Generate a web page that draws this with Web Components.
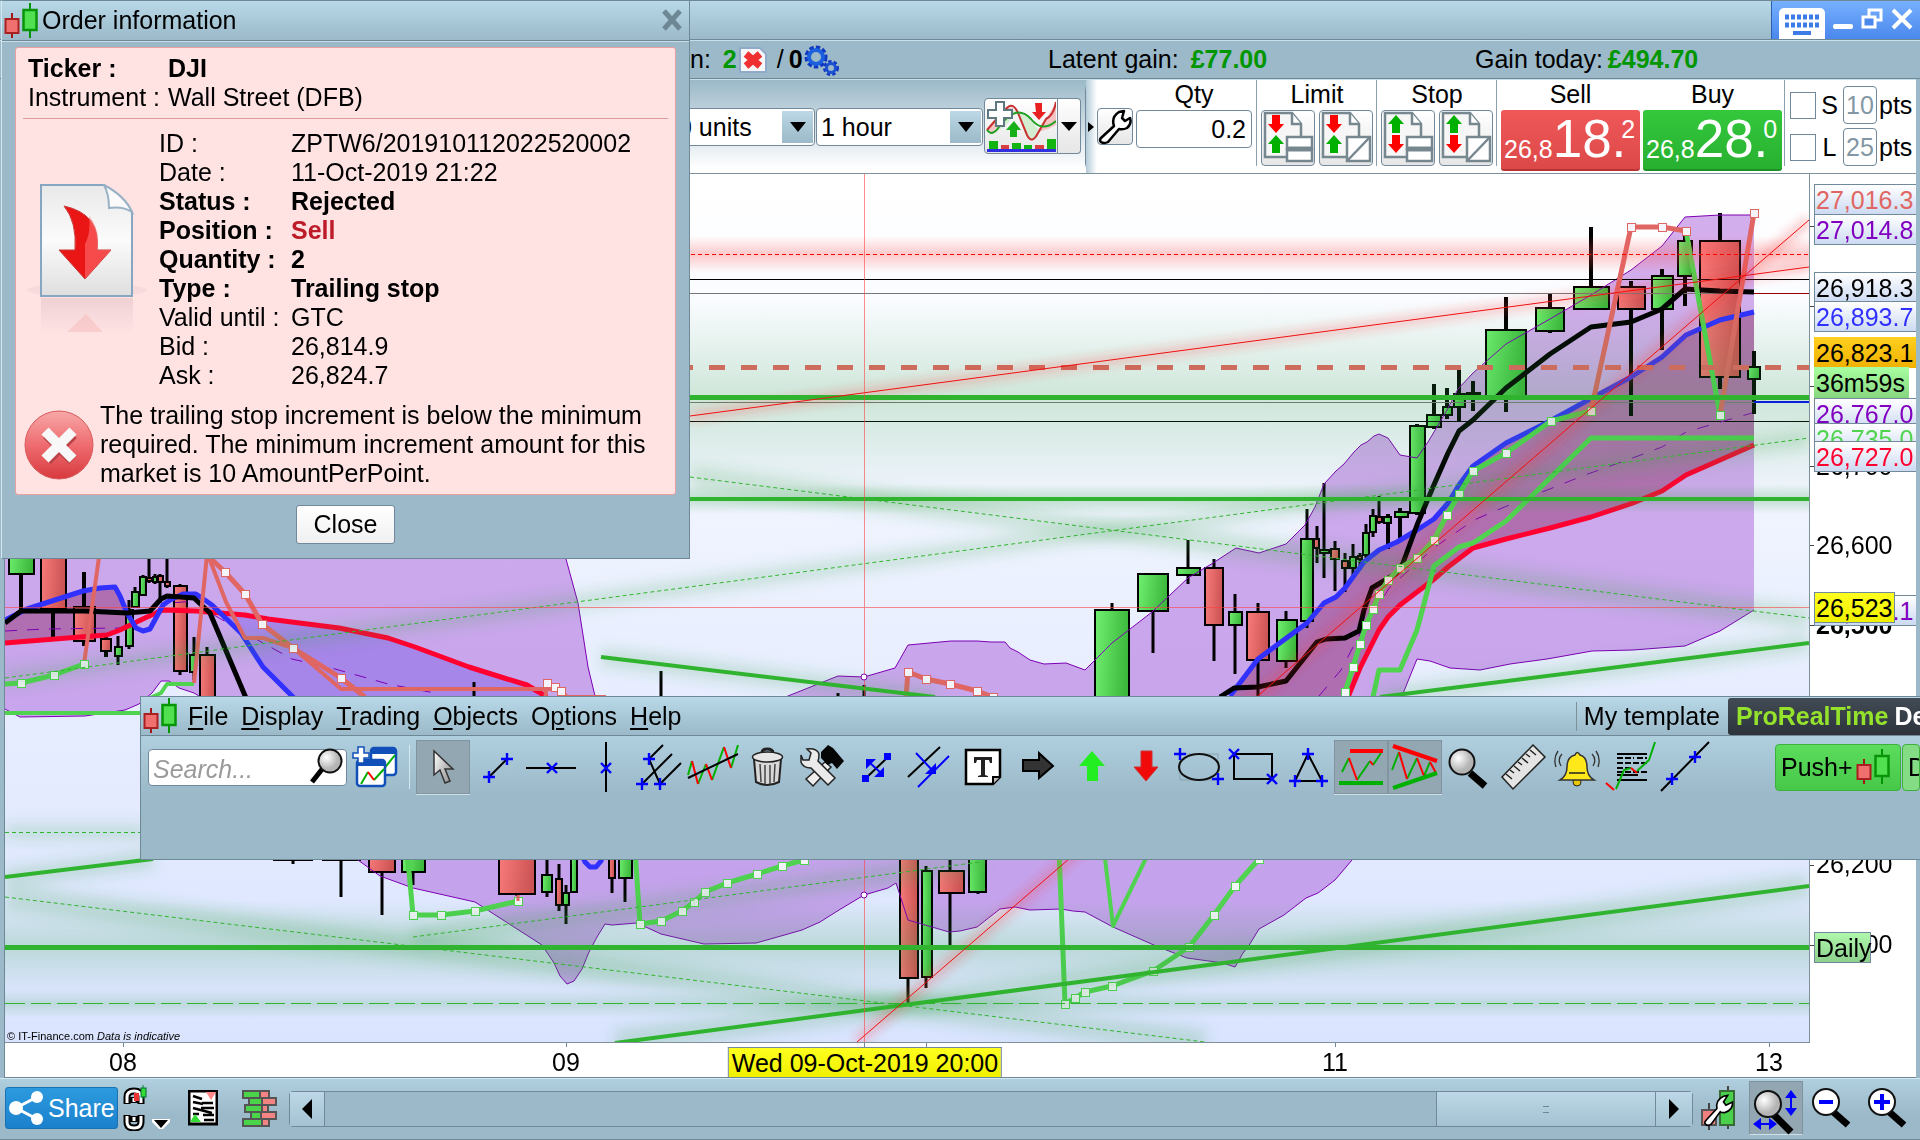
<!DOCTYPE html>
<html lang="en">
<head>
<meta charset="utf-8">
<title>Order information</title>
<style>
html,body{height:100%}
body{margin:0;overflow:hidden;font:25px/29px "Liberation Sans",Arial,sans-serif;color:#000;background:#9bb9c9}
</style>
</head>
<body>
<prt-desktop></prt-desktop>
<script>
const define = (name, html, setup) => customElements.define(name, class extends HTMLElement {
  constructor() {
    super();
    this.attachShadow({mode: 'open'}).innerHTML =
      '<style>*{box-sizing:border-box}button,input,select{font:inherit;color:inherit;margin:0}</style>' + (typeof html === 'function' ? html(this) : html);
    if (setup) setup(this.shadowRoot, this);
  }
});

/* ---------- icons ---------- */
const plus = (x, y) => `<path d="M${x-6} ${y}h12M${x} ${y-6}v12" stroke="#00f" stroke-width="2.4" fill="none"/>`;
const cross = (x, y) => `<path d="M${x-5} ${y-5}l10 10M${x+5} ${y-5}l-10 10" stroke="#00f" stroke-width="2.4" fill="none"/>`;
const ln = (d, c = '#000', w = 2) => `<path d="${d}" stroke="${c}" stroke-width="${w}" fill="none"/>`;
const wrench = 'M4 33L17 19Q15 9 25 4L30 3L25 11L28 15L36 11Q37 21 26 24Q22 24 21 23L10 38Q6 41 3 38Q1 36 4 33Z';
const red = '#f00', grn = '#00b000';
const docBase = `<path d="M3 2H30L39 13V46H3Z" fill="#f6f6f6" stroke="#76878f" stroke-width="2.500"/><path d="M30 2V13H39" fill="#fff" stroke="#76878f" stroke-width="2.500"/>`;
const aDown = (x, y, c) => `<path d="M${x-4} ${y}h8v9h4l-8 9l-8 -9h4z" fill="${c}"/>`;
const aUp = (x, y, c) => `<path d="M${x-4} ${y+18}h8v-9h4l-8 -9l-8 9h4z" fill="${c}"/>`;
const stacked = '<rect x="25" y="26" width="25" height="12" fill="#fff" stroke="#76878f" stroke-width="2.500"/><rect x="25" y="38" width="25" height="12" fill="#fff" stroke="#76878f" stroke-width="2.500"/><path d="M24 38H51" stroke="#76878f" stroke-width="5"/>';
const slashed = '<rect x="27" y="26" width="23" height="24" fill="#fff" stroke="#76878f" stroke-width="2.500"/><path d="M27 50L50 26" stroke="#76878f" stroke-width="2.500"/>';
const I = {
  candles: [36, 38, `<path d="M8 11V36" stroke="#a01818" stroke-width="2"/><rect x="1.500" y="17" width="13" height="14" fill="#f07070" stroke="#a82020" stroke-width="2"/><path d="M26 1V36" stroke="#009400" stroke-width="2"/><rect x="19.500" y="8" width="13" height="20" fill="#50e050" stroke="#089408" stroke-width="2.500"/>`],
  x: [22, 22, ln('M3 2L19 20M19 2L3 20', '#6d8794', 5)],
  cursor: [54, 54, `<defs><linearGradient id="cg" x2="1" y2=".6"><stop stop-color="#fff"/><stop offset="1" stop-color="#999"/></linearGradient></defs><path d="M18 11V35L24 30L29 43L34 41L29 29H37Z" fill="url(#cg)" stroke="#333" stroke-width="1.500"/>`],
  trend: [54, 54, ln('M19 37L37 19') + plus(37, 19) + plus(19, 37)],
  hline: [54, 54, ln('M2 28H52') + cross(28, 28)],
  vline: [54, 54, ln('M28 2V52') + cross(28, 28)],
  fork: [54, 54, ln('M31 5L17 19L28 44L49 23M10 44L40 14') + plus(17, 19) + plus(10, 44) + plus(28, 44)],
  zig: [54, 54, ln('M2 35L6 21M12 44L20 24M26 40L38 7M45 28L52 5', grn) + ln('M6 21L12 44M20 24L26 40M38 7L45 28', red) + ln('M2 38L52 14')],
  trash: [54, 54, `<path d="M22 13Q22 9 27 9Q33 9 33 13" fill="none" stroke="#222" stroke-width="3"/><path d="M14 19L16 42Q27 48 39 42L41 19Z" fill="#d8d8d8" stroke="#222" stroke-width="2"/><ellipse cx="27.500" cy="17" rx="15" ry="5" fill="#e6e6e6" stroke="#222" stroke-width="1.500"/><path d="M20 24L21 42M25 25V44M30 25V44M35 24L34 42" stroke="#444" stroke-width="1.500"/>`],
  tools: [54, 54, `<path d="M31 22L37 27L19 46L12 39Z" fill="#eee" stroke="#222" stroke-width="1.500"/><path d="M27 12L34 5L39 8L50 21L43 29L38 23L34 25L27 18Z" fill="#050505"/><path d="M7 15L9 20L15 20L17 13L13 9Q23 8 25 14Q25 19 24 21L41 38L34 45L17 28Q9 28 7 22Z" fill="#eaeaea" stroke="#222" stroke-width="1.500"/>`],
  arrows: [54, 54, ln('M17 39L40 17') + `<rect x="36" y="13" width="7" height="7" fill="#00f"/><rect x="14" y="35" width="7" height="7" fill="#00f"/>` + ln('M21 22L34 34', '#00f') + '<path d="M18 19h10l-10 10zM36 37h-10l10 -10z" fill="#00f"/>'],
  par: [54, 54, ln('M6 37L38 7') + ln('M16 47L47 16M14 13L32 32', '#00f') + '<path d="M34 34h-11l11 -11z" fill="#00f"/>'],
  text: [54, 54, `<path d="M10 10H44V37L37 44H10Z" fill="#fff" stroke="#000" stroke-width="2.500"/><path d="M37 44V37H44" fill="#bbb" stroke="#000" stroke-width="2"/><path d="M18 17H36V23H34L33 20H29V35L32 36V37H22V36L25 35V20H21L20 23H18Z" fill="#222"/>`],
  right: [54, 54, '<path d="M13 20H29V13L43 26L29 38V31H13Z" fill="#333" stroke="#000" stroke-width="2"/>'],
  up: [54, 54, '<path d="M28 11L41 26H34V41H23V26H15Z" fill="#22ee22"/>'],
  down: [54, 54, '<path d="M23 11H34V27H40L28 41L16 27H23Z" fill="#f00a0a" stroke="#c33"/>'],
  ellipse: [54, 54, '<rect x="8" y="14" width="38" height="26" fill="none" stroke="#8aa4b2"/><ellipse cx="27" cy="27" rx="20" ry="13" fill="none" stroke="#111" stroke-width="2"/>' + plus(8, 14) + plus(46, 39)],
  rect: [54, 54, ln('M8 14H46V39H8Z') + cross(8, 14) + cross(46, 39)],
  tri: [54, 54, ln('M28 14L15 41H42Z') + plus(28, 14) + plus(15, 41) + plus(42, 41)],
  range: [54, 54, ln('M8 32L15 18M23 40L36 21M39 25L47 13', grn) + ln('M15 18L23 40M36 21L39 25', red) + ln('M16 11H49', red, 4) + ln('M5 43H49', grn, 4)],
  wedge: [54, 54, ln('M4 30L11 12M19 39L29 18M36 36L42 22', grn) + ln('M11 12L19 39M29 18L36 36M42 22L48 33', red) + ln('M5 6L49 21', red, 4) + ln('M5 48L49 33', grn, 4)],
  lens: [54, 54, ln('M28 33L43 46', '#000', 7) + '<circle cx="20" cy="22" r="12.500" fill="url(#gl)" stroke="#111" stroke-width="2"/>'],
  ruler: [54, 54, '<path d="M37 5L49 17L17 49L6 37Z" fill="#e4e4e4" stroke="#222" stroke-width="1.500"/><path d="M10 34l6 5M14 30l4 3M18 26l6 5M22 22l4 3M26 18l6 5M30 14l4 3M34 10l6 5" stroke="#222" stroke-width="1.500"/>'],
  bell: [54, 54, '<circle cx="27" cy="42" r="4" fill="#e8c800" stroke="#222"/><path d="M10 40Q17 36 17 27Q17 17 25 15Q27 10 30 15Q37 17 37 27Q37 36 44 40Z" fill="#ffe81a" stroke="#333" stroke-width="1.500"/><path d="M19 33H35" stroke="#222" stroke-width="1.500"/><path d="M12 14Q7 19 11 26M8 11Q3 18 6 27M42 14Q47 19 43 26M46 11Q51 18 48 27" fill="none" stroke="#333" stroke-width="1.300"/>'],
  textchart: [54, 54, '<path d="M13 14H43M13 40H43M13 35H34" stroke="#000" stroke-width="2"/><path d="M13 18H30M33 18H43M13 23H43M13 28H28M13 32H43" stroke="#000" stroke-width="2" stroke-dasharray="6 2"/>' + ln('M12 49L20 30L27 28M33 31L45 20L51 2', grn) + ln('M2 43L10 50M27 28L33 33', red)],
  seg: [54, 54, ln('M3 51L51 2') + plus(14, 39) + plus(37, 17)],
  search: [36, 38, ln('M3 34L14 20', '#000', 5) + '<circle cx="21" cy="13" r="11.500" fill="url(#gl)" stroke="#111" stroke-width="2"/>'],
  tmpl: [46, 42, `<rect x="19" y="2" width="25" height="27" rx="3" fill="#fff" stroke="#1050b8" stroke-width="2.500"/><path d="M19 2h25v6H19z" fill="#1050b8"/>${ln('M31 24L43 9', grn)}<rect x="5" y="14" width="28" height="26" rx="3" fill="#fff" stroke="#1050b8" stroke-width="2.500"/><path d="M5 14h28v6H5z" fill="#1050b8"/>${ln('M9 38L16 26M22 34L32 23', grn)}${ln('M16 26L22 34', red)}<path d="M6 1h6v6h5v5h-5v5H6v-5H1V7h5z" fill="#fff" stroke="#1050b8" stroke-width="1.500"/>`],
  keyboard: [46, 31, `<rect x="0" y="0" width="46" height="36" rx="5" fill="#fff"/><path d="M6 9H40M6 17H40" stroke="#3d7ce6" stroke-width="5" stroke-dasharray="4 2"/><path d="M14 25H32" stroke="#3d7ce6" stroke-width="4"/>`],
  min: [20, 22, '<rect x="0" y="16" width="20" height="5" rx="2" fill="#fff"/>'],
  restore: [22, 22, '<rect x="8" y="2" width="12" height="10" fill="none" stroke="#fff" stroke-width="3"/><rect x="2" y="9" width="12" height="10" fill="#4a88ec" stroke="#fff" stroke-width="3"/>'],
  winx: [22, 22, ln('M2 2L20 20M20 2L2 20', '#fff', 4)],
  cancel: [30, 28, '<path d="M2 2H22L28 8V26H2Z" fill="#f6f6f8" stroke="#8fa9c8" stroke-width="2"/><path d="M8 8L22 20M22 8L8 20" stroke="#f03030" stroke-width="7"/>'],
  gears: [36, 32, '<circle cx="12" cy="13" r="9" fill="none" stroke="#1038c0" stroke-width="5" stroke-dasharray="4 2"/><circle cx="12" cy="13" r="7" fill="none" stroke="#1c60e0" stroke-width="4"/><circle cx="27" cy="24" r="6" fill="none" stroke="#1038c0" stroke-width="4" stroke-dasharray="3 2"/><circle cx="27" cy="24" r="4.500" fill="none" stroke="#1c50d0" stroke-width="3"/>'],
  indic: [70, 54, `<path d="M1 38Q12 28 22 10L30 12Q20 30 8 33ZM31 14Q44 16 53 33Q50 41 45 40Q38 30 31 14Z" fill="#d4ecd0"/><path d="M1 30L18 8L28 9Q14 24 6 34ZM53 33L60 20L70 3V26Q62 31 53 33Z" fill="#f4c4c4"/>${ln('M1 31Q12 18 22 8Q28 4 32 14L41 36Q46 46 52 34L60 20Q68 16 70 3', '#c83030')}${ln('M1 31Q6 38 13 28Q30 4 45 20Q56 34 70 22', '#20a020')}<path d="M10 3h8v8h8v8h-8v8h-8v-8H2v-8h8z" fill="#fff" stroke="#607880" stroke-width="2"/><path d="M24 38h7v-7h4l-7 -9l-8 9h4z" fill="#18b018"/><path d="M49 4h7v9h4l-7 8l-7 -8h4z" fill="#e82020"/><path d="M3 42h9v8H3zM26 44h9v6h-9zM38 46h8v4h-8zM61 40h9v10h-9z" fill="#12b412"/><path d="M15 46h8v4h-8zM49 46h9v4h-9z" fill="#d84040"/><path d="M1 51.500H70" stroke="#3030e0" stroke-width="3"/>`],
  wrench: [34, 36, `<path d="M3 29L16 17Q13 8 21 3L26 2L24 9L27 12L32 9Q34 15 29 19Q25 21 21 20L10 33Q6 35 3 33Q1 31 3 29Z" fill="#fff" stroke="#000" stroke-width="2.500" stroke-linejoin="round"/>`],
  lim1: [52, 54, docBase + aDown(14, 4, red) + aUp(14, 24, grn) + stacked],
  lim2: [52, 54, docBase + aDown(14, 4, red) + aUp(14, 24, grn) + slashed],
  stop1: [52, 54, docBase + aUp(14, 4, grn) + aDown(14, 24, red) + stacked],
  stop2: [52, 54, docBase + aUp(14, 4, grn) + aDown(14, 24, red) + slashed],
  share: [38, 36, '<path d="M29 7L8 18L29 29" fill="none" stroke="#fff" stroke-width="3"/><circle cx="29" cy="7" r="6" fill="#fff"/><circle cx="8" cy="18" r="7" fill="#fff"/><circle cx="29" cy="29" r="6" fill="#fff"/>'],
  link: [24, 46, `<path d="M4 19V12Q4 6 11 6Q18 6 18 12V19M11 12V18M4 30V37Q4 43 11 43Q18 43 18 37V30M11 31V37" fill="none" stroke="#000" stroke-width="7"/><path d="M4 18V12Q4 6 11 6Q18 6 18 12V18M4 31V37Q4 43 11 43Q18 43 18 37V31M11 13V17M11 32V36" fill="none" stroke="#fff" stroke-width="3"/><path d="M20 0V14" stroke="#084"/><rect x="11" y="8" width="5" height="8" fill="#e33"/><rect x="18" y="3" width="5" height="9" fill="#3d3" stroke="#063"/>`],
  tri2: [20, 12, '<path d="M1 1H19V4L12 11H8L1 4Z" fill="#fff"/><path d="M3 2H17L10 10Z" fill="#000"/>'],
  list: [30, 36, '<rect x="1" y="1" width="28" height="33" fill="#fff" stroke="#000" stroke-width="3"/><path d="M5 6L14 9M5 12L15 14M5 18L24 23M13 18H26M14 13H25M15 25H26M16 30H26M5 24H11" stroke="#000" stroke-width="2.500"/><path d="M18 2h10l-5 8z" fill="#f88"/><path d="M2 32h11l-6 -8z" fill="#3d3"/>'],
  book: [36, 37, [[1,18,27],[7,20,34],[3,20,26],[9,19,34],[1,20,27]].map((r, i) => `<rect x="${r[0]}" y="${1 + i * 7}" width="${r[1] - r[0]}" height="7" fill="#4ad44a" stroke="#555" stroke-width="2"/><rect x="${r[1]}" y="${1 + i * 7}" width="${r[2] - r[1]}" height="7" fill="#f48484" stroke="#555" stroke-width="2"/>`).join('')],
  left: [14, 20, '<path d="M12 0V20L2 10Z"/>'],
  rightt: [14, 20, '<path d="M2 0V20L12 10Z"/>'],
  wcandle: [36, 46, '<path d="M8 18V45M27 1V44" stroke="#444" stroke-width="2"/><rect x="1" y="25" width="14" height="15" fill="#f08080" stroke="#555" stroke-width="2"/><rect x="19" y="6" width="14" height="34" fill="#4ad04a" stroke="#396b39" stroke-width="2"/>' + `<path d="${wrench}" fill="#fff" stroke="#000" stroke-width="2" transform="translate(2 8) scale(.82)"/>`],
  zfit: [54, 54, ln('M24 33L42 51', '#000', 7) + '<circle cx="19" cy="23" r="13" fill="url(#gl)" stroke="#111" stroke-width="2"/><path d="M42 12V31M9 43H23" stroke="#00f" stroke-width="2"/><path d="M42 9l6 8h-12zM42 35l6 -8h-12zM4 43l8 -6v12zM28 43l-8 -6v12z" fill="#00f"/>'],
  zout: [42, 42, ln('M19 23L36 38', '#000', 7) + '<circle cx="14" cy="15" r="13" fill="#fff" stroke="#111" stroke-width="2"/><path d="M7 15H21" stroke="#00f" stroke-width="4"/>'],
  zin: [42, 42, ln('M19 23L36 38', '#000', 7) + '<circle cx="14" cy="15" r="13" fill="#fff" stroke="#111" stroke-width="2"/><path d="M6 15H22M14 7V23" stroke="#00f" stroke-width="4"/>'],
  doc: [128, 152, `<defs><linearGradient id="dg" y2="1" x2="0"><stop stop-color="#e9e9e9"/><stop offset=".5" stop-color="#fbfbfb"/><stop offset="1" stop-color="#dedede"/></linearGradient><linearGradient id="rf" x2="0" y2="1"><stop stop-color="#e8c9ce"/><stop offset="1" stop-color="#fee3e3"/></linearGradient></defs><ellipse cx="62" cy="106" rx="60" ry="7" fill="#e6c6ca" opacity=".3"/><path d="M16 114H108V148H16Z" fill="url(#rf)" opacity=".7"/><path d="M61 130L78 148H42Z" fill="#f4b0b0" opacity=".4"/><path d="M16 1H79Q100 14 107 28V112H16Z" fill="url(#dg)" stroke="#86a6c2" stroke-width="2"/><path d="M79 1Q84 10 84 24Q98 22 107 28Q100 12 79 1Z" fill="#fafafa" stroke="#9ab2c6" stroke-width="2"/><path d="M39 22Q52 38 50 66H34L60 95L86 66H72Q76 30 39 22Z" fill="#ea1616" stroke="#c83a3a"/><path d="M64 32Q76 46 72 66H86L60 95V60Q66 50 64 32Z" fill="#ff7070" opacity=".6"/>`],
  error: [70, 70, '<defs><linearGradient id="eg" x2="0" y2="1"><stop stop-color="#f8a8a8"/><stop offset=".5" stop-color="#ee6c70"/><stop offset="1" stop-color="#d83a3e"/></linearGradient></defs><circle cx="35" cy="35" r="34" fill="url(#eg)" stroke="#d85a5c"/><path d="M22 22L48 48M48 22L22 48" stroke="#b84448" stroke-width="11" transform="translate(1 2)"/><path d="M21 21L49 49M49 21L21 49" stroke="#f8f8f8" stroke-width="10"/>'],
};
define('prt-icon', el => {
  const [w, h, body] = I[el.getAttribute('name')];
  return `<style>:host{display:inline-block;flex:none;line-height:0}svg{display:block}</style>
  <svg width="${w}" height="${h}" viewBox="0 0 ${w} ${h}" aria-hidden="true"><defs><radialGradient id="gl" cx=".35" cy=".35"><stop stop-color="#fff"/><stop offset="1" stop-color="#b4b4b4"/></radialGradient></defs>${body}</svg>`;
});

/* ---------- price chart ---------- */
const candles = [
 [21,540,609,9,34,540,574,'g'],[53,540,637,41,66,540,609,'r'],[84,572,646,74,95,607,641,'r'],[106,637,657,101,111,639,651,'r'],
 [118,636,665,115,122,647,656,'g'],[129,600,649,126,133,610,646,'g'],[135,587,608,132,139,592,607,'g'],[143,575,596,140,146,577,595,'g'],
 [149,550,583,147,152,578,581,'r'],[155,574,584,153,157,577,582,'g'],[160,574,603,158,163,576,582,'r'],[167,550,588,165,170,582,586,'r'],
 [180,584,675,174,187,586,671,'r'],[194,637,680,190,196,655,672,'g'],[207,647,710,200,215,655,710,'r'],
 [293,855,864,274,312,858,860,'g'],[341,855,897,323,360,858,860,'g'],[382,855,915,369,395,850,872,'r'],[413,855,885,402,425,850,872,'g'],
 [517,850,896,499,535,850,894,'r'],[547,855,897,542,552,875,892,'g'],[559,864,911,556,562,879,905,'r'],[566,885,924,563,569,893,905,'g'],
 [574,850,893,571,577,850,892,'g'],[612,850,893,609,615,850,878,'r'],[625,850,902,619,632,850,878,'g'],
 [908,850,1003,900,918,850,978,'r'],[926,866,988,922,932,871,977,'g'],[950,850,950,939,964,871,893,'r'],[978,850,894,969,986,850,892,'g'],
 [1112,603,700,1095,1129,610,710,'g'],[1153,574,653,1138,1168,574,611,'g'],[1188,540,584,1177,1200,568,575,'g'],[1214,559,661,1205,1223,568,625,'r'],
 [1235,594,674,1229,1242,612,625,'g'],[1258,603,700,1247,1269,612,660,'r'],[1286,611,668,1277,1297,620,661,'g'],[1307,509,628,1301,1313,539,621,'g'],
 [1317,526,563,1314,1319,539,548,'r'],[1324,483,578,1320,1329,550,553,'g'],[1335,541,591,1331,1339,549,559,'r'],[1345,553,592,1342,1348,561,568,'r'],
 [1353,544,578,1350,1356,557,568,'g'],[1360,553,570,1358,1362,556,559,'r'],[1366,524,558,1363,1369,533,555,'g'],[1373,509,537,1370,1376,516,532,'g'],
 [1379,496,524,1377,1382,517,522,'r'],[1388,514,549,1384,1391,517,523,'g'],[1400,508,538,1395,1408,512,517,'g'],[1417,424,515,1410,1425,426,513,'g'],
 [1434,384,429,1427,1441,415,427,'g'],[1447,388,419,1443,1452,407,415,'g'],[1459,368,421,1454,1465,394,407,'g'],[1473,381,411,1467,1480,393,394,'r'],
 [1506,297,412,1486,1526,330,397,'g'],[1550,294,333,1536,1564,308,331,'g'],[1591,227,310,1574,1609,287,309,'g'],[1631,281,416,1618,1645,287,309,'r'],
 [1662,269,350,1652,1673,276,309,'g'],[1685,234,306,1678,1692,241,276,'g'],[1720,213,389,1700,1740,241,377,'r'],[1754,351,414,1748,1760,367,379,'g']];
const upA = '5,500 560,500 566,559 578,603 588,667 595,696 640,800';
const upB = '740,720 788,696 838,676 864,677 895,668 908,645 951,641 977,641 991,642 1005,642 1010,648 1018,652 1030,660 1044,664 1066,663 1085,670 1112,643 1152,612 1188,578 1213,563 1236,548 1259,553 1286,544 1305,525 1315,507 1324,484 1336,471 1344,464 1354,452 1361,445 1367,442 1374,436 1379,434 1388,438 1400,455 1417,458 1428,442 1437,427 1447,410 1458,389 1473,373 1506,344 1550,319 1591,295 1631,270 1662,246 1685,217 1720,215 1754,215';
const low = '1754,610 1720,631 1685,646 1633,650 1592,651 1547,659 1510,664 1480,670 1450,668 1430,661 1417,659 1402,696 1352,860 1335,880 1318,893 1306,898 1284,915 1259,929 1248,947 1243,953 1235,967 1223,963 1187,958 1156,946 1113,927 1085,912 1073,911 1061,909 1030,910 1015,907 1000,909 977,927 960,931 949,932 908,920 896,883 888,888 864,895 839,910 820,922 802,930 781,936 756,943 704,944 661,934 637,923 612,925 605,924 597,937 589,952 582,969 574,981 567,984 560,976 554,963 542,945 475,902 413,888 380,876 358,860 300,800 199,696 194,693 179,688 169,681 161,681 152,693 139,704 125,710 85,716 20,717 5,709';
const blueL = '5,620 27,609 83,591 100,588 115,587 120,596 127,613 136,628 143,631 150,629 163,605 170,600 183,594 196,594 212,605 241,633 263,667 294,698';
const redL = '5,643 80,637 107,635 120,630 147,617 163,610 196,611 245,615 268,619 339,628 388,638 415,647 469,667 504,678 527,685 547,697';
const blueR = '1230,696 1258,659 1307,623 1324,603 1336,597 1345,588 1364,562 1379,550 1397,542 1417,530 1434,519 1448,503 1459,485 1473,466 1506,443 1550,421 1592,398 1631,377 1662,357 1686,335 1720,320 1754,312';
const redR = '1348,697 1360,668 1379,630 1388,617 1400,605 1417,592 1433,580 1448,567 1473,548 1506,539 1550,528 1591,517 1633,503 1662,491 1686,475 1754,445';
const rev = s => s.split(' ').reverse().join(' ');
const pl = (pts, c, w, extra = '') => `<polyline points="${pts}" fill="none" stroke="${c}" stroke-width="${w}" stroke-linejoin="round" ${extra}/>`;
const sq = (pts, c) => pts.split(' ').map(p => { const [x, y] = p.split(',').map(Number); return `<rect x="${x - 3.5}" y="${y - 3.5}" width="8" height="8" fill="#f4f4fa" stroke="${c}"/>`; }).join('');
const G = '#50d450', S = '#e06664', T = '#30b430';
const gL = '5,684 21,683 54,675 84,664', gM = '413,915 441,915 475,911 518,901', gM2 = '640,924 661,921 682,911 694,902 705,892 727,883 757,874 782,866 804,860';
const gR1 = '1065,1004 1075,998 1085,992 1112,986 1153,971 1189,947 1214,915 1235,886 1259,859';
const gR = '1345,692 1353,667 1360,644 1366,625 1373,609 1379,594 1388,580 1400,568 1417,558 1434,540 1447,515 1459,494 1473,471 1506,453 1551,421 1591,411';
const sA = '225,572 245,594 262,624 293,648 341,678', sM = '908,672 926,679 950,684 977,691 993,697';
const glow = (pts, w, c = '#30a040', o = .2) => `<polyline points="${pts}" fill="none" stroke="${c}" stroke-width="${w}" opacity="${o}"/>`;
const band = (y1, y2, c, o) => `<rect x="5" y="${y1}" width="1804" height="${y2 - y1}" fill="url(#${c})" opacity="${o}"/>`;
define('price-chart', `<style>:host{display:block;position:relative;min-width:0;min-height:0;overflow:hidden;border-right:1px solid #7e909a;border-bottom:1px solid #7e909a}
svg{display:block;width:100%;height:100%}p{position:absolute;left:2px;bottom:0;margin:0;font-size:11px;line-height:12px;white-space:nowrap}</style>
<svg viewBox="5 174 1804 868" preserveAspectRatio="none" role="img" aria-label="Wall Street hourly chart">
<defs>
<linearGradient id="bg" x2="0" y2="1"><stop stop-color="#fff"/><stop offset=".1" stop-color="#fcfdff"/><stop offset=".5" stop-color="#ebf0ff"/><stop offset="1" stop-color="#dae4ff"/></linearGradient>
<linearGradient id="up" x2="1" y2=".15"><stop stop-color="#70f070"/><stop offset="1" stop-color="#3cb83c"/></linearGradient>
<linearGradient id="dn" x2="1" y2=".15"><stop stop-color="#fa7c7c"/><stop offset="1" stop-color="#cc5454"/></linearGradient>
<linearGradient id="gg" x2="0" y2="1"><stop stop-color="#30a040" stop-opacity="0"/><stop offset=".5" stop-color="#30a040"/><stop offset="1" stop-color="#30a040" stop-opacity="0"/></linearGradient>
<linearGradient id="rg" x2="0" y2="1"><stop stop-color="#ff5050" stop-opacity="0"/><stop offset=".5" stop-color="#ff5050"/><stop offset="1" stop-color="#ff5050" stop-opacity="0"/></linearGradient>
<filter id="bl" filterUnits="userSpaceOnUse" x="-40" y="140" width="1900" height="940"><feGaussianBlur stdDeviation="7"/></filter>
<filter id="bs" filterUnits="userSpaceOnUse" x="-40" y="140" width="1900" height="940"><feGaussianBlur stdDeviation="4"/></filter>
</defs>
<rect x="5" y="174" width="1804" height="868" fill="url(#bg)"/>
<g id="scene"></g>
</svg><p>© IT-Finance.com&nbsp;<i>Data is indicative</i></p>`, root => {
  const c = candles.map(([x, hi, lo, a, b, t, d, k]) =>
    `<path d="M${x} ${hi}V${lo}" stroke="#000" stroke-width="${x > 1380 || x < 110 ? 4 : 3}"/><rect x="${a}" y="${t}" width="${b - a}" height="${Math.max(d - t, 1)}" fill="url(#${k === 'g' ? 'up' : 'dn'})" stroke="#000" stroke-width="2"/>`).join('');
  root.querySelector('#scene').innerHTML =
   `<polygon points="${upA} ${upB} ${low}" fill="#aa5ed9" opacity=".5"/>
    <polygon points="${blueR} ${rev(redR)}" fill="#871b57" opacity=".4"/>
    <polygon points="5,620 27,609 83,591 115,587 127,613 130,625 120,630 107,635 80,637 5,643" fill="#871b57" opacity=".4"/>
    <polygon points="196,611 245,615 268,619 339,628 388,638 415,647 469,667 504,678 547,697 294,697 263,667 241,633 212,605" fill="#4528e4" opacity=".25"/>
    ${c}
    ${pl(upA, '#7d00b4', 1)}${pl(upB, '#7d00b4', 1)}${pl(low, '#7d00b4', 1)}
    <path d="M5 279.500H1809M5 421.500H1809" stroke="#000"/><path d="M5 293.500H1809M5 402.500H1809" stroke="#777"/>
    ${pl('474,682 474,700', '#000', 3)}${pl('661,671 661,700', '#000', 3)}${pl('838,693 838,700', '#000', 3)}${pl('864,685 864,700', '#000', 3)}
    ${pl('5,631 45,629 120,628 150,614 170,603 196,601 214,615 245,633 292,659 335,669 388,684 440,694', '#7d00b4', 1, 'stroke-dasharray="12 10"')}
    ${pl('1319,696 1341,670 1362,630 1390,587 1435,547 1474,520 1507,506 1585,475 1630,459 1662,447 1686,432 1752,413', '#7d00b4', 1, 'stroke-dasharray="12 12"')}
    ${pl(redL, '#ff0030', 5)}${pl(redR, '#ff0030', 5)}${pl(blueL, '#3030ff', 5)}${pl(blueR, '#3030ff', 5)}
    ${pl('580,850 585,862 590,867 596,867 601,861 604,850', '#3030ff', 5)}
    ${pl('5,623 21,611 85,611 127,613 150,611 161,599 167,596 194,598 210,613 246,698', '#000', 5)}
    ${pl('1220,697 1234,688 1258,687 1286,681 1317,642 1326,639 1345,638 1359,631 1364,610 1372,588 1397,573 1403,563 1417,525 1433,487 1448,453 1459,431 1473,420 1506,388 1550,354 1591,327 1631,322 1662,309 1685,289 1720,291 1754,292', '#000', 5)}
    ${pl('5,713 141,713', G, 4)}${pl('150,698 161,693 167,684 194,684', G, 4)}
    ${pl(gL, G, 5)}${sq(gL.slice(6), G)}${pl('100,550 84,664', S, 4)}${sq('84,664', G)}${pl('194,683 207,555', S, 4)}
    ${pl('207,555 ' + sA + ' 365,697', S, 5)}${pl('208,555 226,602 245,638 263,638 293,648 341,689 560,689 567,697', S, 4)}${pl('545,700 547,683 555,687 561,691 567,700', S, 4)}${pl('558,696 606,696', S, 2)}${sq(sA + ' 547,683 555,687 561,691', S)}
    ${pl('407,850 ' + gM, G, 5)}${sq(gM, G)}${pl('635,850 ' + gM2, G, 5)}${sq(gM2, G)}${pl('518,895 518,901', S, 3)}
    ${pl('1059,850 ' + gR1, G, 5)}${sq(gR1, G)}${pl('1104,850 1113,926 1150,850', G, 4)}
    ${pl('906,697 ' + sM, S, 5)}${sq(sM, S)}
    ${pl('1373,697 1379,670 1400,670 1417,630 1434,566 1459,547 1473,543 1506,521 1591,438 1754,438', G, 5)}
    ${pl(gR, G, 5)}${pl('1591,411 1631,227 1662,227 1686,231', S, 5)}${pl('1686,231 1720,415', G, 5)}${pl('1720,415 1754,213', S, 5)}
    ${sq(gR + ' 1720,415', G)}${sq('1631,227 1662,227 1686,231 1754,213', S)}
    <path d="M1754 293.500H1809" stroke="#900"/><path d="M1754 402H1809" stroke="#00f" stroke-width="2"/>
    ${band(236, 273, 'rg', .3)}${band(300, 496, 'gg', .2)}${band(484, 514, 'gg', .25)}${band(900, 993, 'gg', .2)}${band(989, 1018, 'gg', .18)}
    <path d="M5 367.500H1809" stroke="#cb6c5c" stroke-width="5" stroke-dasharray="16 16"/>
    <g filter="url(#bl)">${glow('5,678 1809,438', 16)}${glow('690,477 1809,618', 22)}${glow('5,897 1205,1042', 24)}${glow('413,937 980,862', 20)}${glow('601,657 935,697', 18)}${glow('1380,697 1809,643', 18)}${glow('5,878 153,859', 18)}${glow('5,832 145,832', 14)}${glow('615,1042 1809,886', 24)}</g>
    <g filter="url(#bs)">${glow('690,416 1809,267', 12, '#ff3030', .2)}${glow('857,1042 1809,220', 12, '#ff3030', .22)}</g>
    <path d="M5 254.500H1809" stroke="#f00" stroke-dasharray="4 3"/>
    <g fill="none" stroke="${T}"><path d="M5 678L1809 438M690 477L1809 618M5 897L1205 1042M413 937L980 862M5 832.500H145" stroke-dasharray="4 3"/>
    <path d="M5 1003.500H1809" stroke-dasharray="20 6"/>
    <path d="M601 657L935 697M1380 697L1809 643M5 877L153 859M615 1043L1809 886M5 499H1809" stroke-width="4"/><path d="M5 397.500H1809M5 947.500H1809" stroke-width="5"/></g>
    <path d="M690 416L1809 267M857 1042L1809 220" stroke="#f01010" fill="none"/>
    <path d="M5 607.500H1809M864.500 174V1042" stroke="#ff4040" opacity=".6"/>
    <g fill="#fff" stroke="#7d00b4"><circle cx="864" cy="677" r="3"/><circle cx="864" cy="895" r="3"/></g>`;
});

const at = (v, from, span) => `${((v - from) / span * 100).toFixed(4)}%`;
define('price-axis', `<style>:host{display:block;position:relative;background:#fff;overflow:hidden}
#r{display:contents}
span{position:absolute;left:4px;padding:0 2px;height:31px;line-height:31px;white-space:nowrap}
.b{border:1px solid #71899a;background:linear-gradient(#fff,#ccdaf2);width:103px;padding:0 1px}
.f{line-height:33px}
i{position:absolute;left:0;width:4px;height:1px;background:#444}
</style><div id="r"></div>`, root => {
  const y = v => at(v, 174, 869);
  const ticks = [226,306,386,466,545,625,865,945].map(v => `<i style="top:${y(v)}"></i>`).join('');
  const plain = [[451,'26,700'],[530,'26,600'],[610,'26,500','font-weight:bold'],[849,'26,200'],[929,'26,100']]
    .map(([v, t, s = '']) => `<span style="top:${y(v)};${s}">${t}</span>`).join('');
  const boxed = [[184,'27,016.3','#e06664'],[214,'27,014.8','#8000c0'],[272,'26,918.3','#000'],[301,'26,893.7','#3030ff'],
    [398,'26,767.0','#8000c0'],[423,'26,735.0','#50d450'],[441,'26,727.0','#ff0030'],[595,'26,521.1','#8000c0']]
    .map(([v, t, c]) => `<span class="b" style="top:${y(v)};color:${c}">${t}</span>`).join('');
  root.querySelector('#r').innerHTML = ticks + plain + boxed +
    `<span class="f" style="top:${y(337)};background:linear-gradient(#ffd020,#f0b000);width:103px">26,823.1</span>
     <span class="f" style="top:${y(367)};background:linear-gradient(#a8ffa0,#86d680);width:95px">36m59s</span>
     <span class="b" style="top:${y(592)};width:81px;background:linear-gradient(#ffff20,#f0f000)">26,523</span>
     <span class="b" style="top:${y(932)};width:57px;background:linear-gradient(#b0f8ac,#8cd08c)">Daily</span>`;
});
define('time-axis', `<style>:host{display:block;position:relative;background:#fff;height:34px}
#r{display:contents}
span{position:absolute;top:5px;transform:translateX(-50%);white-space:nowrap}
span.b{top:4px;height:30px;line-height:30px;padding:0 3px;border:1px solid #71899a;border-bottom:0;background:linear-gradient(#ffff20,#f0f000)}
i{position:absolute;top:0;width:1px;height:4px;background:#71899a}</style><div id="r"></div>`, root => {
  root.querySelector('#r').innerHTML = [[123,'08'],[566,'09'],[1335,'11'],[1769,'13']]
    .map(([x, t]) => `<i style="left:${at(x, 5, 1911)}"></i><span style="left:${at(x, 5, 1911)}">${t}</span>`).join('') +
    `<i style="left:${at(926, 5, 1911)}"></i><i style="left:${at(864, 5, 1911)}"></i><span class="b" style="left:${at(865, 5, 1911)}">Wed 09-Oct-2019 20:00</span>`;
});

/* ---------- main window ---------- */
define('title-bar', `<style>:host{display:flex;justify-content:flex-end;height:40px;border-top:1px solid #6f8895;border-bottom:1px solid #6f8895;background:linear-gradient(#b8d8e8,#9bb9c8)}
nav{display:flex;align-items:flex-start;gap:8px;padding:7px 7px 0 7px;background:linear-gradient(#76b0ff,#4a88ec);border-left:1px solid #2c5fb0}
button{border:0;padding:0;background:none;line-height:0}</style>
<nav aria-label="Window"><button aria-label="Keyboard"><prt-icon name="keyboard"></prt-icon></button><button aria-label="Minimise"><prt-icon name="min"></prt-icon></button><button aria-label="Restore"><prt-icon name="restore"></prt-icon></button><button aria-label="Close window"><prt-icon name="winx"></prt-icon></button></nav>`);

define('status-bar', `<style>:host{display:grid;grid-template-columns:690fr 358fr 427fr 445fr;align-items:center;height:39px;background:#9bb9c8;border-top:1px solid #c6dfeb;border-bottom:1px solid #6f8895;white-space:nowrap}
div{display:flex;align-items:center}b{color:#009600;margin-left:12px}.t b{margin-left:5px}b.k{color:#000;margin-left:5px}prt-icon{margin-left:1px}.s{margin-left:9px}</style>
<span></span><div><span>n:</span><b>2</b><prt-icon name="cancel"></prt-icon><span class="s">/</span><b class="k">0</b><prt-icon name="gears"></prt-icon></div>
<div>Latent gain:<b>£77.00</b></div><div class="t">Gain today:<b>£494.70</b></div>`);

define('price-button', `<style>:host{display:block}button{display:flex;align-items:flex-end;width:139px;height:61px;padding:0 0 7px 3px;border:0;border-radius:3px;color:#fff;text-align:left;background:linear-gradient(#f05858,#dc4848);border-bottom:2px solid #b83434}
:host([side=buy]) button{background:linear-gradient(#34c83c,#28b030);border-color:#1c9024}
.m{font-size:53px;line-height:50px;margin-bottom:-2px}.p{line-height:29px;align-self:flex-start;margin-top:5px;margin-left:-5px}.h{line-height:25px}</style>
<button><span class="h"><slot name="handle"></slot></span><span class="m"><slot></slot></span><span class="p"><slot name="pip"></slot></span></button>`);

define('trade-bar', `<style>:host{display:flex;justify-content:flex-end;height:95px;margin:0 4px 0 2px;border-bottom:1px solid #7e909a;background:linear-gradient(#9bb9c8,#fff 95%);border-top:1px solid #c6dfeb;overflow:hidden}
.sel{position:relative;display:flex;margin:28px 1px 0 0;height:38px}
select{appearance:none;width:167px;height:38px;padding:0 35px 0 4px;border:1px solid #71899a;border-radius:4px;background:#fff}
.sel::after{content:"";position:absolute;right:2px;top:3px;width:31px;height:32px;background:linear-gradient(#bcd8e6,#9bb9c8);pointer-events:none}
.sel::before{content:"";position:absolute;z-index:1;right:9px;top:14px;border:8px solid transparent;border-top:10px solid #000;border-bottom:0;pointer-events:none}
button{padding:0;border:1px solid #71899a;border-radius:4px;background:linear-gradient(#fff,#e6e6e6);display:flex;align-items:center;justify-content:center}
.ind{display:flex;margin:18px 4px 0 0}.ind button{height:56px;width:74px;border-radius:4px 0 0 4px}.ind button+button{width:23px;border-radius:0 4px 4px 0;border-left:0}
.panel{display:flex;background:#fff;border-left:1px solid #71899a;border-radius:10px 0 0 10px;width:831px}.panel>*{flex:none}
.dn{border:8px solid transparent;border-top:9px solid #000;border-bottom:0}
.grip{width:11px;background:linear-gradient(90deg,#b4ccd8,#fff);display:flex;align-items:center}.grip::after{content:"";border:5px solid transparent;border-left:6px solid #000;border-right:0;margin-left:2px}
.w{width:36px;height:37px;margin:28px 3px 0 0}
.col{display:flex;flex-direction:column;align-items:center;border-right:1px solid #8ba0ab;height:86px;padding:0 3px 0 4px}
.col.q{padding:0 4px 0 0}
.lab{display:block;height:30px;line-height:28px;text-align:center}
.row{display:flex;gap:4px}.row button{width:54px;height:56px}
.qty{width:116px;height:38px;text-align:right;padding:0 5px;border:1px solid #71899a;border-radius:4px;background:#fff}
.col.last{padding-right:2px}.col.last .row{gap:3px}
.opts{margin-top:6px;padding-left:5px;display:grid;grid-template:38px 38px/26px 27px 34px 39px;row-gap:4px;align-content:start;align-items:center;justify-items:center}
.opts input[type=text]{width:34px;height:38px;border:1px solid #71899a;border-radius:4px;padding:0;text-align:center;color:#8398a4;background:#fff}
.opts input[type=checkbox]{appearance:none;width:26px;height:27px;border:1px solid #71899a;background:#fff;margin:0}
.opts span{justify-self:start;padding-left:2px}
</style>
<div class="sel"><select aria-label="Units" style="width:142px"><option>0 units</option></select></div>
<div class="sel"><select aria-label="Timeframe"><option>1 hour</option></select></div>
<div class="ind"><button aria-label="Add indicator"><prt-icon name="indic"></prt-icon></button><button aria-label="Indicator menu"><span class="dn"></span></button></div>
<div class="panel"><div class="grip"></div><button class="w" aria-label="Order settings"><prt-icon name="wrench"></prt-icon></button>
<div class="col q"><label class="lab" for="q">Qty</label><input class="qty" id="q" value="0.2"></div>
<div class="col"><span class="lab">Limit</span><div class="row"><button aria-label="Limit order"><prt-icon name="lim1"></prt-icon></button><button aria-label="Limit with slash"><prt-icon name="lim2"></prt-icon></button></div></div>
<div class="col"><span class="lab">Stop</span><div class="row"><button aria-label="Stop order"><prt-icon name="stop1"></prt-icon></button><button aria-label="Stop with slash"><prt-icon name="stop2"></prt-icon></button></div></div>
<div class="col last"><div class="row"><div><span class="lab">Sell</span><price-button side="sell"><span slot="handle">26,8</span>18.<span slot="pip">2</span></price-button></div><div><span class="lab">Buy</span><price-button side="buy"><span slot="handle">26,8</span>28.<span slot="pip">0</span></price-button></div></div></div>
<div class="opts"><input type="checkbox" id="s"><label for="s">S</label><input type="text" value="10" aria-label="Stop points"><span>pts</span><input type="checkbox" id="l"><label for="l">L</label><input type="text" value="25" aria-label="Limit points"><span>pts</span></div>
</div>`);

define('nav-bar', `<style>:host{display:flex;align-items:center;height:62px;padding:0 10px 2px 5px;border-top:1px solid #d4e8f2;border-bottom:1px solid #6f8895;background:linear-gradient(#b0cfde,#9bb9c8 60%)}
button{border:0;background:none;padding:0;display:flex;align-items:center;justify-content:center;flex:none}
.share{width:113px;height:42px;color:#fff;background:linear-gradient(#2c9ade,#1c80cc);border:1px solid #1872b4;border-radius:3px;justify-content:flex-start;gap:2px;padding-left:2px}
.track{display:flex;flex:1;min-width:0;height:36px;margin:2px 0 0 11px;border:1px solid #71899a;border-radius:4px;background:#9bb9c8;justify-content:space-between}
.track button{width:35px;background:linear-gradient(#bcd8e6,#a4c2d2);border-right:1px solid #71899a}.end{display:flex}.end .thumb{width:220px;border-left:1px solid #71899a}.end button:last-child{border-right:0;width:36px}
.thumb::after{content:"";width:6px;height:5px;border-top:1px solid #6d8794;border-bottom:1px solid #6d8794}
.on{background:#93a7b2;border:1px solid #7f929d;border-bottom-color:#d0e0e8;width:54px;height:54px;margin:0 9px 0 12px}</style>
<button class="share"><prt-icon name="share"></prt-icon>Share</button>
<button aria-label="Link charts" style="margin-left:5px"><prt-icon name="link"></prt-icon></button><button aria-label="Link menu" style="margin:32px 0 0 4px"><prt-icon name="tri2"></prt-icon></button>
<button aria-label="Orders list" style="margin-left:17px"><prt-icon name="list"></prt-icon></button><button aria-label="Order book" style="margin-left:24px"><prt-icon name="book"></prt-icon></button>
<div class="track"><button aria-label="Scroll left"><prt-icon name="left"></prt-icon></button><div class="end"><button class="thumb" aria-label="Scroll position"></button><button aria-label="Scroll right"><prt-icon name="rightt"></prt-icon></button></div></div>
<button aria-label="Chart settings" style="margin-left:8px"><prt-icon name="wcandle"></prt-icon></button>
<button class="on" aria-label="Fit"><prt-icon name="zfit"></prt-icon></button><button aria-label="Zoom out"><prt-icon name="zout"></prt-icon></button><button aria-label="Zoom in" style="margin-left:14px"><prt-icon name="zin"></prt-icon></button>`);

define('chart-window', `<style>:host{display:flex;flex-direction:column;height:100%;background:#9bb9c8}
main{flex:1;min-height:0;display:grid;grid-template:minmax(0,1fr) 34px/minmax(0,1fr) 106px;margin:0 4px 0 4px;border-left:1px solid #6f8895;border-bottom:1px solid #6f8895}
time-axis{grid-column:1/3}</style>
<title-bar></title-bar><status-bar></status-bar><trade-bar></trade-bar>
<main><price-chart></price-chart><price-axis></price-axis><time-axis></time-axis></main><nav-bar></nav-bar>`);

/* ---------- floating windows ---------- */
define('tool-window', `<style>:host{display:block;background:linear-gradient(#b0cfde 40px,#9bb9c8 60%);border:1px solid #6f8895;border-right:0;overflow:hidden;white-space:nowrap}
header{display:flex;align-items:center;height:39px;border-bottom:1px solid #6f8895;background:linear-gradient(#b8d8e8,#9bb9c8);padding-left:2px}
nav{display:flex;gap:13px;flex:1;margin-left:9px}a{color:inherit;text-decoration:none}u{text-underline-offset:3px;text-decoration-thickness:2px}
.tpl{border-left:1px solid #7e909a;padding:0 8px 0 7px}.brand{background:linear-gradient(#424b55,#2c333b);color:#95e22c;font-weight:bold;height:37px;line-height:36px;padding-left:8px;border-radius:3px 0 0 3px;width:192px;overflow:hidden}.brand span{color:#fff;margin-left:6px}
.bar{display:flex;align-items:center;padding:4px 0 0 7px;height:58px}
.search{display:flex;align-items:center;width:199px;height:37px;background:#fff;border:1px solid #71899a;border-radius:4px;flex:none}
input{border:0;background:none;width:160px;padding:4px 0 0 4px;outline:0}input::placeholder{color:#9a9a9a;font-style:italic;opacity:1}
button{border:0;background:none;padding:0;width:54px;height:54px;flex:none;display:flex}
.t{width:46px;height:42px;margin:0 11px 0 5px}.sep{border-left:1px solid #d4e8f2;height:44px;margin-right:6px}
.on{background:#93a7b2;box-shadow:inset 0 0 0 1px #8195a0,0 1px #d0e0e8}
.p{background:linear-gradient(#5cdc5c,#48c848);border:1px solid #3eb03e;border-radius:4px;width:126px;height:47px;align-items:center;padding-left:5px;gap:3px}.p.d{background:#84dc84;margin-left:1px;width:18px;overflow:hidden}.sp{flex:1}</style>
<header><prt-icon name="candles"></prt-icon><nav aria-label="Menu"><a href="#"><u>F</u>ile</a><a href="#"><u>D</u>isplay</a><a href="#"><u>T</u>rading</a><a href="#"><u>O</u>bjects</a><a href="#">O<u>p</u>tions</a><a href="#"><u>H</u>elp</a></nav>
<div class="tpl">My template</div><div class="brand">ProRealTime<span>De</span></div></header>
<div class="bar"><div class="search"><input type="text" placeholder="Search..." aria-label="Search"><prt-icon name="search"></prt-icon></div>
<button class="t" aria-label="New chart"><prt-icon name="tmpl"></prt-icon></button><span class="sep"></span><span id="tools" style="display:flex"></span>
<span class="sp"></span><button class="p">Push+<prt-icon name="candles"></prt-icon></button><button class="p d">D</button></div>`, root => {
  root.querySelector('#tools').innerHTML = 'cursor trend hline vline fork zig trash tools arrows par text right up down ellipse rect tri range wedge lens ruler bell textchart seg'
    .split(' ').map(n => `<button aria-label="${n}"${/cursor|range|wedge/.test(n) ? ' class="on"' : ''}><prt-icon name="${n}"></prt-icon></button>`).join('');
});

define('order-dialog', `<style>:host{display:block;background:#9bb9c8;border:1px solid #6f8895;border-left-color:#d4e8f2}
header{display:flex;align-items:center;height:40px;padding:0 6px 0 2px;border-bottom:1px solid #6f8895;background:linear-gradient(#b8d8e8,#9bb9c8);box-shadow:0 1px #c6dfeb}
h1{flex:1;font:inherit;margin:0 0 4px 2px;height:26px}header button{border:0;background:none;padding:0;line-height:0;margin-bottom:2px}
section{margin:6px 13px 0 13px;background:#ffe2e2;border:1px solid #e8a0a0;border-radius:3px;padding:6px 7px}
dl{display:grid;margin:0;white-space:nowrap}dt,dd{margin:0}
.top{grid-template-columns:140px 1fr;padding:0 0 6px 5px;border-bottom:1px solid #dc9c9c}
.mid{display:flex;align-items:center;padding:10px 0 0 2px}.mid dl{grid-template-columns:132px 1fr;margin-left:6px}
.b{font-weight:bold}.r{color:#bc1c28}
.msg{display:flex;align-items:center;gap:6px;padding:11px 0 0 1px}p{margin:0;white-space:nowrap}
.close{display:block;margin:10px auto 0;width:99px;height:39px;border:1px solid #71899a;border-radius:3px;background:linear-gradient(#fff,#f0f0f0);padding:0}</style>
<header><prt-icon name="candles"></prt-icon><h1>Order information</h1><button aria-label="Dismiss"><prt-icon name="x"></prt-icon></button></header>
<section><dl class="top"><dt class="b">Ticker :</dt><dd class="b">DJI</dd><dt>Instrument :</dt><dd>Wall Street (DFB)</dd></dl>
<div class="mid"><prt-icon name="doc"></prt-icon><dl><dt>ID :</dt><dd>ZPTW6/201910112022520002</dd><dt>Date :</dt><dd>11-Oct-2019 21:22</dd>
<dt class="b">Status :</dt><dd class="b">Rejected</dd><dt class="b">Position :</dt><dd class="b r">Sell</dd><dt class="b">Quantity :</dt><dd class="b">2</dd><dt class="b">Type :</dt><dd class="b">Trailing stop</dd>
<dt>Valid until :</dt><dd>GTC</dd><dt>Bid :</dt><dd>26,814.9</dd><dt>Ask :</dt><dd>26,824.7</dd></dl></div>
<div class="msg"><prt-icon name="error"></prt-icon><p>The trailing stop increment is below the minimum<br>required. The minimum increment amount for this<br>market is 10 AmountPerPoint.</p></div></section>
<button class="close">Close</button>`);

define('prt-desktop', `<style>:host{display:block;position:relative;height:100vh;overflow:hidden}
tool-window{position:absolute;left:140px;top:696px;right:0;height:164px}
order-dialog{position:absolute;left:1px;top:0;width:689px;height:559px}</style>
<chart-window></chart-window><tool-window></tool-window><order-dialog></order-dialog>`);
</script>
</body>
</html>
